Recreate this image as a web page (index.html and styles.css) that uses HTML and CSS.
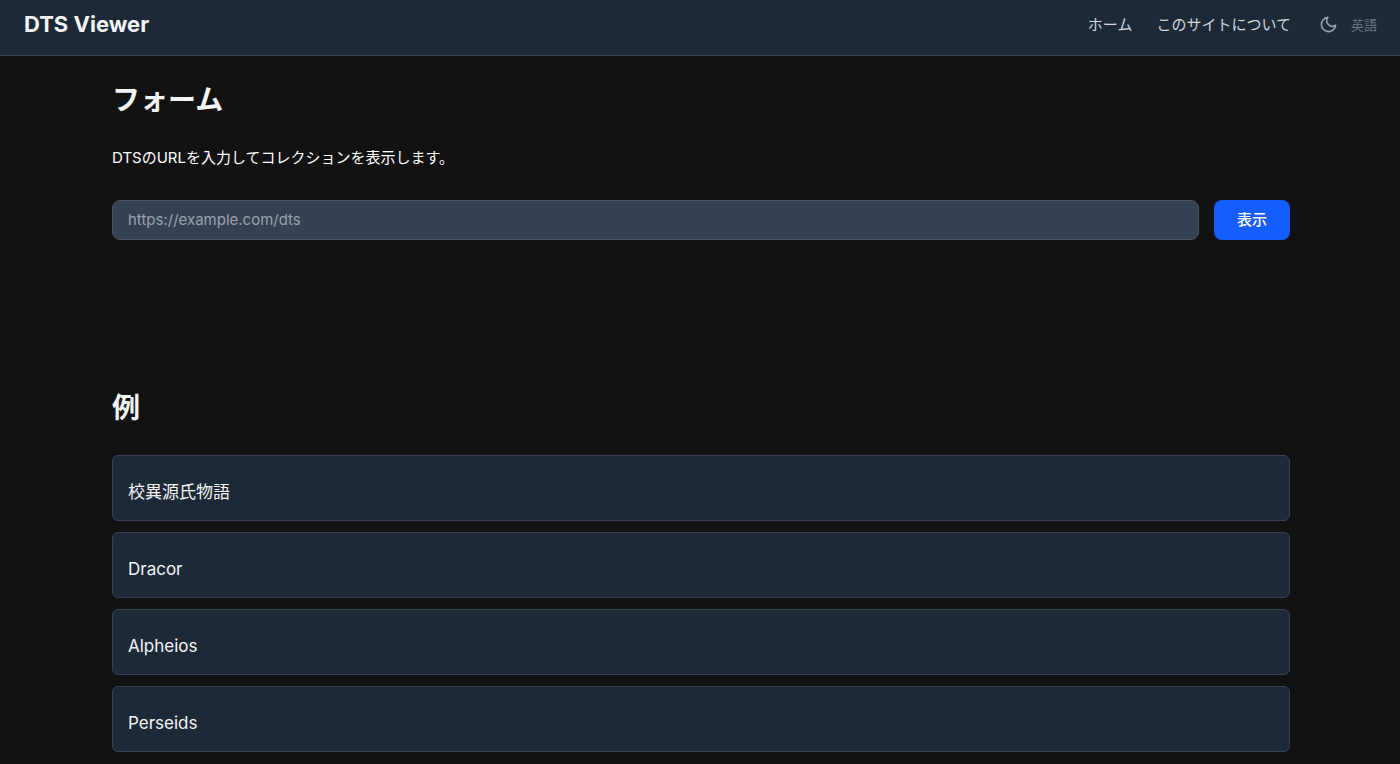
FILE: index.html
```html
<!DOCTYPE html>
<html lang="ja">
<head>
    <meta charset="UTF-8">
    <meta name="viewport" content="width=device-width, initial-scale=1.0">
    <title>DTS Viewer</title>
    <link rel="stylesheet" href="styles.css">
</head>
<body>

    <header class="header">
        <a class="logo" href="#">DTS Viewer</a>
        <nav class="nav">
            <a class="nav-link" href="#">ホーム</a>
            <a class="nav-link" href="#about">このサイトについて</a>
            <div class="nav-tools">
                <button class="theme-button" type="button" aria-label="ダークモード">
                    <svg viewBox="0 0 24 24" width="19" height="19" fill="none" stroke="currentColor" stroke-width="2" stroke-linecap="round" stroke-linejoin="round">
                        <path d="M21 12.79A9 9 0 1 1 11.21 3 7 7 0 0 0 21 12.79z"/>
                    </svg>
                </button>
                <a class="lang-link" href="#en">英語</a>
            </div>
        </nav>
    </header>

    <main class="container">
        <!-- URL form -->
        <section class="form-section">
            <h1>フォーム</h1>
            <label class="description" for="dtsUrl">DTSのURLを入力してコレクションを表示します。</label>
            <form class="url-form">
                <input class="url-input" type="url" id="dtsUrl" placeholder="https://example.com/dts">
                <button class="submit-button" type="submit">表示</button>
            </form>
        </section>

        <!-- Examples -->
        <section>
            <h2>例</h2>
            <div class="examples">
                <a class="example" href="#">校異源氏物語</a>
                <a class="example" href="#">Dracor</a>
                <a class="example" href="#">Alpheios</a>
                <a class="example" href="#">Perseids</a>
            </div>
        </section>
    </main>

</body>
</html>
```
FILE: styles.css
```css
/* General Styles */
* {
    box-sizing: border-box;
}

body {
    margin: 0;
    font-family: Inter, "Noto Sans CJK JP", sans-serif;
    font-size: 15px;
    line-height: 24px;
    background-color: #121212;
    color: #fff;
}

a {
    color: inherit;
    text-decoration: none;
}

/* Header Styles */
.header {
    display: flex;
    justify-content: space-between;
    align-items: center;
    padding: 8px 23px 14px 24px;
    background-color: #1e2937;
    border-bottom: 1px solid #364153;
}

.logo {
    font-size: 22px;
    line-height: 33px;
    font-weight: 700;
    color: #f3f4f6;
}

.nav {
    display: flex;
    align-items: center;
    gap: 24px;
    color: #d1d5dc;
}

.nav-tools {
    display: flex;
    align-items: center;
    gap: 13px;
    margin-left: 4px;
}

.theme-button {
    display: flex;
    padding: 0;
    border: none;
    background: none;
    color: #99a1af;
    cursor: pointer;
}

.lang-link {
    font-size: 13px;
    color: #6a7282;
}

/* Main Section Styling */
.container {
    padding: 24px 110px 12px 112px;
}

h1,
h2 {
    margin: 0;
    font-size: 28px;
    line-height: 40px;
    font-weight: 700;
    color: #f3f4f6;
}

/* Form Styles */
.form-section {
    margin-bottom: 148px;
}

.description {
    display: block;
    margin: 26px 0 30px;
}

.url-form {
    display: flex;
    gap: 15px;
}

.url-input,
.submit-button {
    height: 40px;
    border-radius: 8px;
    font-family: inherit;
    font-size: 15px;
}

.url-input {
    flex: 1;
    min-width: 0;
    padding: 0 15px 2px;
    border: 1px solid #4a5565;
    background-color: #364153;
    color: #fff;
}

.url-input::placeholder {
    color: #99a1af;
}

.submit-button {
    padding: 0 23px 4px;
    border: none;
    background-color: #155dfc;
    color: #fff;
    font-weight: 500;
    cursor: pointer;
}

.submit-button:hover {
    background-color: #1447e6;
}

/* Example List Styles */
.examples {
    display: flex;
    flex-direction: column;
    gap: 11px;
    margin-top: 27px;
}

.example {
    padding: 23px 15px 15px;
    border: 1px solid #364153;
    border-radius: 6px;
    background-color: #1e2937;
    font-size: 17px;
    line-height: 26px;
    color: #f3f4f6;
}

.example:hover {
    background-color: #364153;
}
```
